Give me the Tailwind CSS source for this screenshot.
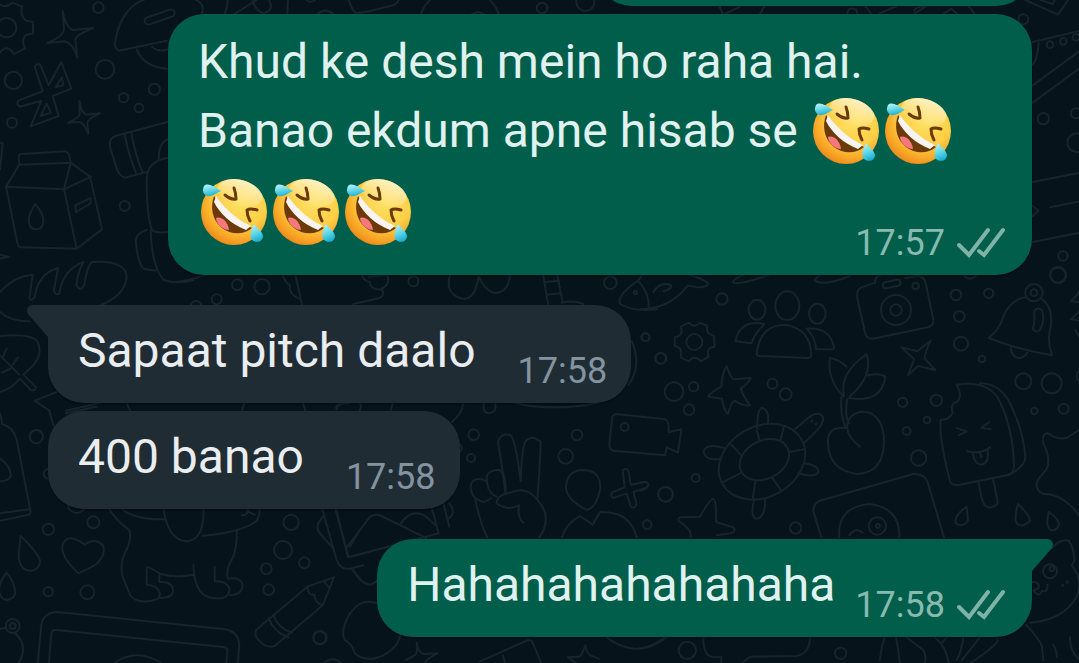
<!DOCTYPE html>
<html lang="en">
<head>
    <meta charset="UTF-8">
    <meta name="viewport" content="width=device-width, initial-scale=1.0">
    <title>Chat</title>
    <script src="https://cdn.jsdelivr.net/npm/@tailwindcss/browser@4"></script>
</head>
<body class="relative min-h-screen overflow-hidden bg-[#07131a] font-[Roboto,sans-serif] text-[48px] leading-[64px]">

    <!-- Wallpaper -->
    <svg class="absolute inset-0 w-full h-full" viewBox="0 0 1079 663" preserveAspectRatio="xMidYMid slice" fill="none" stroke="#17242b" stroke-linecap="round" stroke-linejoin="round" aria-hidden="true">
        <!-- top left: gear, stars, milk carton, bread -->
        <g transform="scale(.33333)" stroke-width="6">
            <circle cx="20" cy="83" r="29"/>
            <path d="M-5 12 Q18 26 37 8 L66 20 Q60 50 79 62 L99 65 V101 Q68 100 69 126 L75 145 L42 162 Q20 130 0 158"/>
            <path d="M188 33 Q198 84 220 90 L279 84 Q228 105 226 118 L232 173 Q220 130 194 124 L142 129 Q192 108 192 88 Z"/>
            <path d="M238 303 Q244 338 258 344 L300 340 Q264 356 262 368 L265 401 Q252 370 240 366 L204 368 Q240 352 239 340 Z"/>
            <circle cx="295" cy="23" r="16"/><circle cx="315" cy="208" r="28"/><circle cx="40" cy="241" r="26"/><circle cx="463" cy="268" r="17"/><circle cx="371" cy="293" r="14"/><circle cx="417" cy="324" r="13"/><circle cx="36" cy="368" r="15"/><circle cx="374" cy="618" r="15"/>
            <path d="M104 200 Q112 188 122 196 L146 256 L184 186 L214 266 L158 288 L176 348 L92 379 L124 302 L60 320 Q48 312 54 302 L128 274 Z M186 232 L166 262 L190 256 Z M140 310 L122 348 L152 338 Z"/>
            <path d="M356 152 Q340 142 346 122 Q364 20 440 -4 M356 152 L500 122 M580 -4 Q620 10 604 46 M410 148 Q430 200 500 206 M456 140 Q474 158 502 148 M674 42 Q684 20 682 0 M758 0 Q764 30 790 40 Q826 30 806 0 M864 0 L862 42 M700 44 L770 0"/>
            <path d="M920 0 Q926 10 944 2 M950 44 Q976 20 1002 44 M1046 0 Q1056 30 1066 38 Q1080 42 1170 18 Q1190 14 1196 0 M1262 44 Q1272 16 1290 0 M1470 0 Q1490 20 1496 44 M1414 44 Q1434 30 1454 44"/>
            <rect x="432" y="40" width="94" height="22" rx="11" transform="rotate(-19 479 51)"/>
            <path d="M502 366 L346 408 Q326 416 330 440 L350 506 Q362 536 380 532 L440 516 M374 402 Q384 460 410 524 M394 396 Q404 460 428 518 M502 418 Q476 430 476 476 M502 474 Q440 484 440 540 Q440 650 456 690 Q466 700 502 696 M440 690 Q404 700 408 730 Q414 790 430 806 L466 812 M452 690 Q456 800 488 836 Q510 860 620 824"/>
            <path d="M58 494 L56 470 Q56 462 66 462 L196 454 Q208 454 212 488 L58 494 L18 560 L192 568 L212 488 L270 530 L306 688 L230 746 L66 742 Q54 742 52 728 L18 560 M192 568 L230 746 M192 568 L274 530 M106 612 Q86 642 86 662 Q88 688 108 688 Q130 688 130 662 Q130 640 106 612 M226 616 L272 594 V610 L228 636 Z"/>
            <path d="M0 428 L8 430 L0 508 M0 764 L26 770 L0 776 M0 876 Q40 830 98 824 L88 896 Q92 904 104 892 Q114 820 174 804 L162 870 Q166 888 178 880 Q188 810 250 786 Q230 826 230 856 Q242 880 254 850 Q262 796 276 786 Q380 780 380 832 Q374 890 290 920"/>
            <circle cx="712" cy="854" r="16"/><circle cx="786" cy="860" r="23"/><circle cx="650" cy="898" r="15"/>
            <path d="M848 824 Q854 846 870 856 Q864 880 896 896 M886 824 L906 914"/>
        </g>
        <!-- right edge, above the camera -->
        <g transform="translate(780) scale(.33333)" stroke-width="6">
            <path d="M736 0 L834 44 L864 0 M782 0 L818 12 L824 0 M758 126 L900 92 M776 130 Q772 180 758 194 M758 256 L900 152 M758 308 L900 204 M758 546 L900 518 M810 622 L900 604 M758 618 L776 632 L758 648 M758 726 L900 698"/>
            <circle cx="730" cy="58" r="15"/><circle cx="810" cy="134" r="10"/><circle cx="850" cy="124" r="10"/><circle cx="888" cy="112" r="10"/><circle cx="790" cy="356" r="17"/><circle cx="888" cy="340" r="15"/><circle cx="890" cy="428" r="28"/><circle cx="849" cy="768" r="14"/><circle cx="834" cy="824" r="24"/>
            <path d="M-182 18 L-172 42 M-166 42 L-120 20 M-60 42 L-46 18 M202 42 Q202 24 218 26 Q232 26 232 42 M256 18 L274 42 M300 40 L350 18 M402 32 Q410 20 430 18 M404 40 L440 18 M492 40 L514 26 L532 42 M566 18 L584 42"/>
            <circle cx="-714" cy="24" r="16"/><circle cx="-584" cy="6" r="27"/>
        </g>
        <!-- left: leaf, bottle, heart, elephant, pencil, tablet -->
        <g transform="translate(0 280) scale(.33333)" stroke-width="6">
            <path d="M0 96 Q30 124 88 124 M0 168 Q92 160 112 184 Q130 220 100 256 L70 284 L108 322 Q106 334 92 330 L60 296 Q30 330 0 336 M0 226 L58 284 M8 232 L20 206 M38 254 L54 232 M6 278 L32 266 M490 0 Q530 14 580 0"/>
            <circle cx="588" cy="78" r="15"/><circle cx="109" cy="470" r="20"/><circle cx="145" cy="581" r="14"/><circle cx="280" cy="727" r="18"/><circle cx="145" cy="748" r="17"/><circle cx="145" cy="935" r="14"/><circle cx="262" cy="937" r="21"/><circle cx="230" cy="672" r="27"/><circle cx="873" cy="727" r="23"/><circle cx="849" cy="810" r="27"/><circle cx="913" cy="848" r="16"/><circle cx="799" cy="866" r="16"/><circle cx="806" cy="929" r="16"/><circle cx="959" cy="1073" r="19"/><circle cx="38" cy="1038" r="21"/><circle cx="38" cy="1038" r="9"/>
            <path d="M170 336 L104 362 L148 392 L160 436 M198 392 L320 364 M198 400 L290 380 M380 368 L390 392 M734 368 L726 390 M908 368 L916 392 M1010 388 Q1010 370 1050 370"/>
            <path d="M0 400 Q6 420 6 432 Q40 440 50 480 L92 696 Q92 704 80 706 L0 722 M0 700 L88 688 M0 536 Q34 560 32 588 Q26 604 0 604"/>
            <path d="M62 768 Q56 810 56 838 Q66 876 96 872 Q120 866 120 842 Q112 816 62 768 M20 878 Q-6 910 -2 936 Q4 960 22 960 Q46 954 46 936 Q42 904 20 878"/>
            <path d="M236 880 Q180 830 188 794 Q204 756 254 794 Q286 770 310 798 Q318 824 290 852 Q266 866 236 880"/>
            <path d="M326 684 Q350 724 386 748 Q396 764 384 800 Q356 850 368 890 L390 944 Q404 966 440 964 Q480 962 480 942 Q474 914 440 914 V862 Q446 858 480 882 Q530 894 582 884 M478 880 V906 Q518 904 520 932 Q518 954 482 954 M580 854 Q580 900 600 934 Q622 960 668 954 Q690 948 688 924 Q678 902 644 904 V862 M684 896 Q726 890 728 920 Q724 944 690 946 M682 890 Q680 864 694 842 Q712 810 710 752 M362 684 Q400 720 498 718 M490 684 Q504 780 560 784 Q614 780 610 684 M608 768 Q730 756 768 724 Q780 710 778 684 M726 706 Q746 706 742 686 M742 694 L764 704"/>
            <path d="M966 684 L1010 840 Q1020 870 1050 866 L1090 856 M1008 684 L1044 832 L1090 820 M972 706 Q940 740 960 760 L1000 806 M1056 868 L1080 896 M1050 800 L1080 750"/>
            <path d="M768 1050 L922 920 L1002 892 L968 976 L824 1098 Q800 1106 780 1084 Q762 1070 768 1050 M806 1014 Q820 1056 866 1072 M820 1004 Q834 1046 876 1058 M922 920 Q924 948 944 944 Q942 966 968 976 M972 904 L988 924"/>
            <path d="M112 1160 L124 1034 Q130 998 172 996 L676 1048 Q716 1056 718 1096 L712 1160 M146 1160 L154 1060 Q156 1048 170 1050 L676 1102 Q684 1106 682 1114 L678 1160 M338 1152 Q410 1100 488 1152 M0 1046 L18 1044 M46 1060 Q88 1100 54 1152"/>
        </g>
        <!-- centre: peace hand, video camera, person, fish -->
        <g transform="translate(320 270) scale(.33333)" stroke-width="6">
            <path d="M126 16 Q132 34 150 36 Q150 60 184 58 M146 20 L202 16 Q212 44 184 56 Q200 80 170 86 L100 102 M390 16 Q376 60 410 80 Q462 108 476 20 Q510 90 552 60 Q568 44 570 16 M670 16 L684 102 M712 16 L728 98 M676 36 L718 32 M680 74 L722 70 M726 98 Q760 90 790 102 M954 32 Q890 76 900 102 Q940 126 1010 118 M954 32 Q990 70 986 118 M954 32 L966 16 M1000 66 Q1020 34 1050 44 Q1060 54 1030 64"/>
            <circle cx="946" cy="68" r="5"/><circle cx="280" cy="34" r="15"/><circle cx="871" cy="38" r="19"/><circle cx="977" cy="202" r="12"/><circle cx="1023" cy="265" r="16"/><circle cx="461" cy="494" r="16"/><circle cx="453" cy="564" r="12"/><circle cx="771" cy="495" r="16"/><circle cx="737" cy="559" r="22"/><circle cx="914" cy="471" r="12"/><circle cx="1037" cy="673" r="22"/><circle cx="981" cy="764" r="13"/><circle cx="0" cy="1103" r="20"/><circle cx="412" cy="534" r="13"/>
            <path d="M936 214 Q966 290 926 344 M580 398 Q700 426 836 398 M492 398 Q486 430 508 430 Q530 428 526 402 M430 400 Q426 430 396 456 M218 400 L212 420 M50 418 Q44 398 76 400 M120 422 Q126 404 120 400"/>
            <path d="M888 432 L1036 448 Q1048 452 1046 486 L1084 478 L1074 548 L1040 532 L1036 556 L880 542 Q868 538 868 524 L876 446 Q878 434 888 432"/>
            <path d="M556 668 Q544 570 534 516 Q544 486 572 496 Q586 506 602 634 Q606 520 620 510 Q640 494 662 516 Q660 600 652 690 M556 668 Q560 610 538 600 Q510 598 500 618 Q500 670 530 680 M500 634 Q462 616 452 646 Q452 690 494 696 L514 684 M466 688 Q480 760 502 802 M530 700 Q530 674 570 668 Q620 646 652 690 Q700 740 658 802 M530 700 Q560 724 598 706 Q590 740 610 758"/>
            <path d="M802 720 Q738 690 738 650 Q742 600 790 600 Q846 602 840 660 Q830 710 802 720 M726 802 Q738 760 780 738 L818 764 L840 726 Q930 722 950 802"/>
            <path d="M908 600 Q920 592 926 604 L932 644 L976 636 Q990 640 980 652 L940 666 L950 702 Q944 718 932 710 L920 670 L880 684 Q868 676 878 666 L914 652 Z"/>
            <path d="M336 716 L356 790 L86 862 L46 716 M82 830 L150 740 Q166 730 184 738 L318 804 M240 764 Q276 710 320 742 L346 766 M370 700 L388 770 M388 700 Q412 730 382 748 M100 900 Q120 940 150 944 Q166 940 176 926"/>
            <path d="M74 1110 Q60 1080 90 1030 Q120 990 150 996 L176 1000 M74 1110 Q96 1120 104 1150 Q140 1180 190 1156 Q236 1130 240 1096 M290 1118 Q296 1150 310 1152 L352 1150 Q316 1168 316 1180 M290 1118 Q294 1150 284 1156 L258 1170 M796 1126 Q784 1160 776 1160 L744 1162 L770 1180 M796 1126 Q800 1150 812 1156 L836 1166 M480 1174 L620 1112 Q634 1106 638 1118 L664 1180 M548 1156 L556 1180 M860 1102 Q950 1170 1040 1102 M10 1180 Q40 1156 64 1180"/>
        </g>
        <!-- right: gear, people, camera, bell, turtle, plant, ice pop -->
        <g transform="translate(640 270) scale(.33333)" stroke-width="6">
            <path d="M0 118 Q90 116 144 46 Q190 60 206 42 Q190 26 150 16 M40 66 Q60 34 92 46 Q100 56 70 64 M278 36 Q290 48 384 16 M278 36 Q288 22 310 16 M524 32 Q550 50 630 18 M524 32 Q528 22 540 16"/>
            <circle cx="246" cy="87" r="17"/><circle cx="16" cy="202" r="12"/><circle cx="62" cy="265" r="16"/><circle cx="102" cy="365" r="28"/><circle cx="161" cy="350" r="14"/><circle cx="147" cy="419" r="16"/><circle cx="397" cy="341" r="15"/><circle cx="437" cy="373" r="18"/><circle cx="788" cy="397" r="14"/><circle cx="889" cy="391" r="17"/><circle cx="861" cy="450" r="10"/><circle cx="800" cy="483" r="12"/><circle cx="836" cy="564" r="23"/><circle cx="167" cy="624" r="12"/><circle cx="76" cy="673" r="22"/><circle cx="22" cy="764" r="13"/><circle cx="467" cy="774" r="17"/>
            <circle cx="948" cy="75" r="16"/><circle cx="1046" cy="70" r="14"/><circle cx="958" cy="139" r="16"/><circle cx="963" cy="221" r="21"/><circle cx="1026" cy="267" r="10"/><circle cx="1150" cy="334" r="24"/><circle cx="1235" cy="340" r="30"/><circle cx="1183" cy="423" r="10"/><circle cx="1271" cy="416" r="15"/><circle cx="1254" cy="16" r="23"/><circle cx="990" cy="4" r="22"/><circle cx="1330" cy="318" r="20"/><circle cx="142" cy="1141" r="26"/><circle cx="602" cy="1150" r="17"/>
            <circle cx="163" cy="216" r="24"/>
            <path d="M146 158 Q162 176 180 158 L202 168 Q196 192 222 198 L224 230 Q196 232 206 260 L182 274 Q164 252 146 274 L122 262 Q130 232 104 228 V202 Q132 198 122 170 Z"/>
            <ellipse cx="351" cy="119" rx="25" ry="30"/><ellipse cx="442" cy="107" rx="36" ry="43"/><ellipse cx="532" cy="131" rx="25" ry="30"/>
            <path d="M350 250 Q360 164 436 164 Q512 176 514 256 Q514 264 502 264 L360 258 Q348 258 350 250 M374 162 Q300 146 286 214 L334 220 Q344 190 374 162 M500 176 Q570 170 582 232 Q582 240 570 238 L528 238 Q526 200 500 176"/>
            <path d="M706 38 L664 52 Q648 60 652 84 L676 192 Q682 208 698 206 L864 172 Q882 166 880 150 L856 34 Q850 18 830 18 L796 24 M706 38 Q704 20 720 16"/><circle cx="768" cy="120" r="45"/><circle cx="768" cy="120" r="17"/><circle cx="827" cy="48" r="10"/><rect x="728" y="33" width="54" height="18" rx="9" transform="rotate(-12 755 42)"/>
            <path d="M1156 82 Q1110 90 1090 140 Q1080 176 1046 204 Q1130 238 1236 256 Q1220 210 1232 170 Q1240 110 1204 86 M1112 234 Q1116 264 1140 264 Q1156 260 1162 248 M1182 126 Q1190 108 1206 120 Q1216 150 1200 180 Q1186 190 1178 176 Q1186 156 1182 126"/><circle cx="1182" cy="68" r="26"/><circle cx="1182" cy="68" r="10"/>
            <path d="M260 288 Q270 320 280 328 L332 324 Q326 340 302 356 Q310 380 330 406 Q310 410 284 392 Q272 400 264 432 Q250 420 246 386 L204 380 Q214 366 244 350 Q246 310 260 288"/>
            <path d="M784 232 L832 244 L872 212 Q854 250 854 266 L886 300 L834 288 L804 316 L822 268 Z"/>
            <path d="M612 380 Q560 330 570 264 Q600 270 620 290 M612 380 Q596 310 680 252 Q700 320 628 380 M684 316 Q720 308 736 320 Q726 400 628 384 M604 382 Q600 430 616 472 M622 386 Q612 440 628 460 M660 530 Q622 500 622 474 Q560 466 564 520 Q566 600 650 612 Q736 610 732 500 Q720 420 660 426 Q620 436 622 474"/>
            <ellipse cx="366" cy="575" rx="136" ry="106" transform="rotate(-29 366 575)"/><ellipse cx="373" cy="569" rx="78" ry="57" transform="rotate(-27 373 569)"/>
            <path d="M350 482 L360 514 M432 468 L422 508 M494 538 L446 546 M424 662 L396 622 M338 688 L346 634 M250 636 L300 610 M274 524 L304 556 M352 476 Q350 414 368 414 Q388 420 384 462 M466 476 L512 438 Q540 422 550 444 Q550 470 492 518 M258 536 Q200 516 190 544 Q196 574 240 566 M490 580 Q540 586 534 608 Q520 624 474 610 M342 688 Q330 744 350 746 Q374 746 376 688"/>
            <circle cx="516" cy="453" r="2"/><circle cx="528" cy="462" r="2"/>
            <path d="M902 450 Q896 500 930 634 Q934 648 960 644 L1100 616 Q1122 610 1122 590 Q1120 480 1080 396 Q1050 330 950 344 Q970 380 950 396 Q930 400 938 430 Q926 450 902 450 M1020 340 Q1080 340 1110 400 Q1150 480 1156 560 Q1156 590 1104 616 M1016 640 Q1024 690 1034 706 Q1046 716 1060 710 Q1076 704 1072 690 L1060 630"/>
            <path d="M950 474 L980 484 L956 496 M1048 456 L1024 474 L1052 478 M982 544 Q1020 554 1050 532 M998 550 Q1004 584 1024 584 Q1050 578 1042 538 M1020 548 L1024 562"/>
            <path d="M980 710 Q940 738 948 760 Q970 774 984 752 Z M1134 702 Q1120 750 1132 762 Q1150 774 1170 752 Q1170 736 1134 702 M1226 726 Q1216 770 1232 780 Q1252 784 1258 762 Q1250 740 1226 726"/>
            <path d="M0 638 Q20 630 26 644 Q22 658 0 662"/>
            <path d="M152 802 Q156 776 116 754 Q112 740 130 742 L180 740 Q210 686 220 686 Q230 690 228 756 L280 772 Q290 786 272 790 L230 796"/>
            <path d="M544 802 L520 724 Q520 700 540 692 L820 612 Q850 610 862 634 L912 802 M598 802 Q590 712 688 702 Q780 712 778 802 M628 796 Q646 770 668 788"/><circle cx="712" cy="768" r="26"/><circle cx="714" cy="768" r="6"/>
            <path d="M1320 478 L1280 504 Q1250 510 1224 490 Q1204 490 1210 520 Q1240 580 1210 610 Q1170 650 1210 672 Q1270 670 1320 740 M1320 60 Q1310 80 1292 94 L1320 96 M1320 120 L1294 148 L1320 152 M1306 180 L1320 204"/>
            <path d="M1236 834 Q1260 806 1286 812 Q1300 830 1304 870 L1296 886 Q1330 930 1310 980 Q1270 1050 1170 1058 M1178 936 Q1200 936 1196 954 L1180 962 M1182 964 Q1200 984 1206 962 Q1224 970 1222 944 M1158 1064 Q1200 1110 1206 1130 L1210 1170 M1250 1160 Q1250 1140 1240 1124 M1290 1102 Q1290 1150 1320 1170"/><circle cx="1230" cy="904" r="21"/><circle cx="1236" cy="896" r="7"/><circle cx="1268" cy="946" r="2"/><circle cx="1282" cy="936" r="2"/>
            <path d="M190 1102 Q190 1158 216 1160 L244 1162 V1180 M306 1180 L330 1160 L470 1158 Q510 1150 510 1102 M720 1170 Q724 1130 734 1102 M768 1102 Q776 1140 780 1180 M800 1102 L850 1140 Q860 1160 854 1180 M884 1102 Q920 1130 926 1180 M970 1102 Q966 1140 950 1170 M1020 1102 L966 1170 M1072 1110 Q1080 1120 990 1180 M904 1120 L920 1102 M0 1136 Q40 1130 74 1102"/>
        </g>
    </svg>

    <!-- Shared symbols -->
    <svg class="absolute w-0 h-0" aria-hidden="true">
        <defs>
            <radialGradient id="face" cx=".62" cy=".32" r=".72">
                <stop offset="0" stop-color="#fde36a"/>
                <stop offset=".55" stop-color="#fdcf45"/>
                <stop offset=".82" stop-color="#f9a826"/>
                <stop offset="1" stop-color="#ee8a1c"/>
            </radialGradient>
            <linearGradient id="shine" x1=".6" y1="0" x2=".5" y2="1">
                <stop offset="0" stop-color="#fff3c9" stop-opacity=".95"/>
                <stop offset="1" stop-color="#fff3c9" stop-opacity="0"/>
            </linearGradient>
            <linearGradient id="tear" x1="0" y1="0" x2=".3" y2="1">
                <stop offset="0" stop-color="#c5f4f7"/>
                <stop offset=".5" stop-color="#6fdcea"/>
                <stop offset="1" stop-color="#21b3d3"/>
            </linearGradient>
            <symbol id="rofl" viewBox="0 0 72 81">
                <circle cx="36" cy="37" r="33" fill="url(#face)"/>
                <ellipse cx="42" cy="18" rx="23" ry="13" fill="url(#shine)" transform="rotate(16 42 18)"/>
                <path d="M16 21 C12 32 14 45 24 53 C33 60 46 60 54 53 C38 46 26 36 16 21Z" fill="#6b3a08"/>
                <path d="M18 43 C24 41 30 47 31 55 C24 55 18 48 18 43Z" fill="#f4787c"/>
                <path d="M18 21 C27 34 38 44 53 51 L48 55 C33 49 22 39 16 27Z" fill="#f6f3f0"/>
                <g fill="none" stroke="#6b3a08" stroke-width="3" stroke-linecap="round" stroke-linejoin="round">
                    <path d="M27 20 Q33 25 38 24 Q38 18 36 13"/>
                    <path d="M59 35 Q52 33 49 35 Q49 41 52 46"/>
                </g>
                <path d="M23 16 C16 12 10 7 6 11 C3 17 7 22 12 21 C17 20 20 17 23 16Z" fill="url(#tear)"/>
                <path d="M56 49 C53 54 51 62 54 65 C59 69 65 66 65 61 C64 56 59 53 56 49Z" fill="url(#tear)"/>
            </symbol>
            <symbol id="ticks" viewBox="0 0 48 31">
                <path d="M2 18 L12 28 L31 3 M22 24 L27 28 L46 3" fill="none" stroke="#7fb3a8" stroke-width="4" stroke-linecap="round" stroke-linejoin="miter"/>
            </symbol>
        </defs>
    </svg>

    <main class="relative flex flex-col items-start pl-12 pr-[47px]">
        <!-- Tail end of the previous message -->
        <div class="self-end flex items-end w-[436px] h-1.5 overflow-hidden">
            <div class="w-full h-24 shrink-0 rounded-[36px] bg-[#005e4b]"></div>
        </div>

        <!-- Sent -->
        <article class="self-end mt-2 grid max-w-[864px] rounded-[36px] bg-[#005e4b] text-[#e0f2f0] shadow-[0_2px_1px_rgba(0,0,0,0.3)]">
            <p class="col-start-1 row-start-1 pt-4 pb-[19px] pl-[30px] pr-6">Khud ke desh mein ho raha hai.<br>Banao ekdum apne hisab se <svg class="inline-block align-middle w-[72px] h-[81px]" role="img" aria-label="rofl"><use href="#rofl"/></svg><svg class="inline-block align-middle w-[72px] h-[81px]" role="img" aria-label="rofl"><use href="#rofl"/></svg><svg class="inline-block align-middle w-[72px] h-[81px]" role="img" aria-label="rofl"><use href="#rofl"/></svg><svg class="inline-block align-middle w-[72px] h-[81px]" role="img" aria-label="rofl"><use href="#rofl"/></svg><svg class="inline-block align-middle w-[72px] h-[81px]" role="img" aria-label="rofl"><use href="#rofl"/></svg></p>
            <div class="col-start-1 row-start-1 self-end justify-self-end flex items-start gap-3 pb-3 pr-[27px] text-[36px] leading-10 text-[#88bab0]">
                <time>17:57</time>
                <svg class="mt-1 w-12 h-[31px]" role="img" aria-label="Delivered"><use href="#ticks"/></svg>
            </div>
        </article>

        <!-- Received -->
        <article class="relative mt-[30px] flex items-end gap-[42px] rounded-[36px] rounded-tl-none bg-[#202c33] pl-[30px] pr-6 text-[#e9edf0] shadow-[0_2px_1px_rgba(0,0,0,0.3)]">
            <svg class="absolute top-0 right-full w-[21px] h-8" viewBox="0 0 21 32" aria-hidden="true"><path d="M21 0 H5 Q-2 2 1 9 L21 32Z" fill="#202c33"/></svg>
            <p class="pt-3.5 pb-5">Sapaat pitch daalo</p>
            <time class="pb-3 text-[36px] leading-10 text-[#8393a0]">17:58</time>
        </article>

        <article class="mt-2 flex items-end gap-[42px] rounded-[36px] bg-[#202c33] pl-[30px] pr-6 text-[#e9edf0] shadow-[0_2px_1px_rgba(0,0,0,0.3)]">
            <p class="pt-3.5 pb-5">400 banao</p>
            <time class="pb-3 text-[36px] leading-10 text-[#8393a0]">17:58</time>
        </article>

        <!-- Sent -->
        <article class="relative self-end mt-[30px] flex items-end gap-5 rounded-[36px] rounded-tr-none bg-[#005e4b] pl-[30px] pr-[27px] text-[#e0f2f0] shadow-[0_2px_1px_rgba(0,0,0,0.3)]">
            <svg class="absolute top-0 left-full w-[21px] h-8" viewBox="0 0 21 32" aria-hidden="true"><path d="M0 0 H16 Q23 2 20 9 L0 32Z" fill="#005e4b"/></svg>
            <p class="pt-3.5 pb-5">Hahahahahahahaha</p>
            <div class="flex items-start gap-3 pb-3 text-[36px] leading-10 text-[#88bab0]">
                <time>17:58</time>
                <svg class="mt-1 w-12 h-[31px]" role="img" aria-label="Delivered"><use href="#ticks"/></svg>
            </div>
        </article>
    </main>
</body>
</html>
